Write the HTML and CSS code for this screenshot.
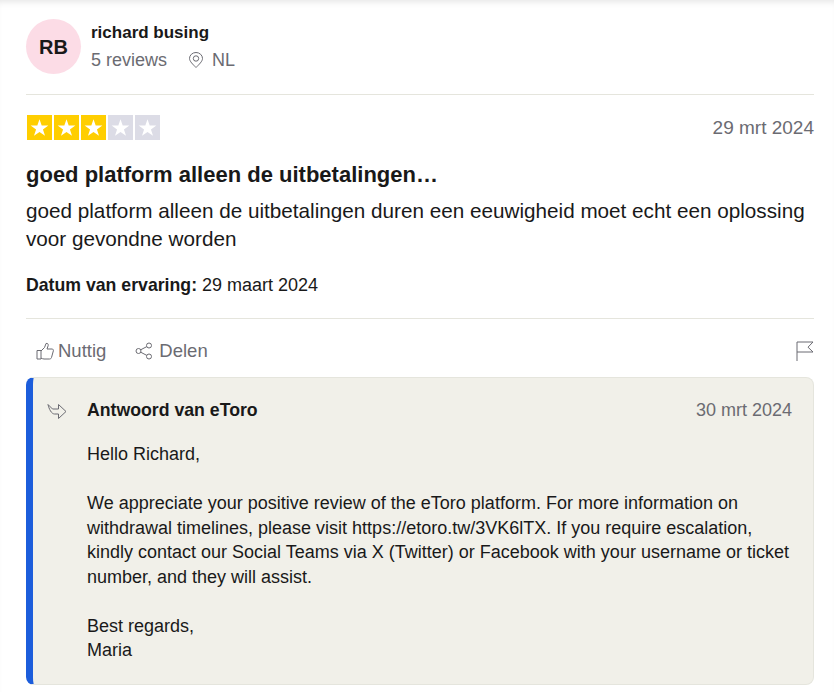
FILE: index.html

```html
<!DOCTYPE html>
<html lang="nl">
<head>
    <meta charset="UTF-8">
    <meta name="viewport" content="width=device-width, initial-scale=1.0">
    <title>Review</title>
    <link rel="stylesheet" href="styles.css">
</head>
<body>
    <article class="review">
        <header class="consumer">
            <div class="avatar">RB</div>
            <div class="consumer-info">
                <div class="consumer-name">richard busing</div>
                <div class="consumer-meta">
                    <span>5 reviews</span>
                    <span class="location">
                        <svg class="icon-pin" viewBox="0 0 16 16" width="16" height="16" fill="none" stroke="#6b6b72" stroke-width="1">
                            <path d="M8 15.500C5 12.500 1.500 9.300 1.500 6.500a6.500 6 0 0 1 13 0c0 2.800-3.500 6-6.500 9z"/>
                            <circle cx="8" cy="6.500" r="2.700"/>
                        </svg>
                        NL
                    </span>
                </div>
            </div>
        </header>

        <section class="review-body">
            <div class="rating-row">
                <div class="stars">
                    <span class="star on"><svg viewBox="0 0 24 24"><path d="M12 4l2.100 6.100h6.400l-5.200 3.800 2 6.100-5.300-3.800L6.700 20l2-6.100-5.200-3.800h6.400z"/></svg></span>
                    <span class="star on"><svg viewBox="0 0 24 24"><path d="M12 4l2.100 6.100h6.400l-5.200 3.800 2 6.100-5.300-3.800L6.700 20l2-6.100-5.200-3.800h6.400z"/></svg></span>
                    <span class="star on"><svg viewBox="0 0 24 24"><path d="M12 4l2.100 6.100h6.400l-5.200 3.800 2 6.100-5.300-3.800L6.700 20l2-6.100-5.200-3.800h6.400z"/></svg></span>
                    <span class="star"><svg viewBox="0 0 24 24"><path d="M12 4l2.100 6.100h6.400l-5.200 3.800 2 6.100-5.300-3.800L6.700 20l2-6.100-5.200-3.800h6.400z"/></svg></span>
                    <span class="star"><svg viewBox="0 0 24 24"><path d="M12 4l2.100 6.100h6.400l-5.200 3.800 2 6.100-5.300-3.800L6.700 20l2-6.100-5.200-3.800h6.400z"/></svg></span>
                </div>
                <time class="date">29 mrt 2024</time>
            </div>
            <h2 class="review-title">goed platform alleen de uitbetalingen…</h2>
            <p class="review-text">goed platform alleen de uitbetalingen duren een eeuwigheid moet echt een oplossing voor gevondne worden</p>
            <p class="experience"><b>Datum van ervaring:</b> 29 maart 2024</p>
        </section>

        <div class="actions">
            <button class="action">
                <svg viewBox="0 0 18 18" width="18" height="18" fill="none" stroke="#6b6b72" stroke-width="1">
                    <path d="M1 8.500h4V17H1z"/>
                    <path d="M5 9l3.500-3.500L10 1.500c1.500-.5 2.500.5 2.200 2L11 7h5c1.200 0 1.600 1 1.300 2l-1.800 6.500c-.3 1-1 1.500-2 1.500H8c-1.200 0-2-.6-3-.8"/>
                </svg>
                Nuttig
            </button>
            <button class="action share">
                <svg viewBox="0 0 18 18" width="18" height="18" fill="none" stroke="#6b6b72" stroke-width="1">
                    <circle cx="3.500" cy="9" r="2.500"/>
                    <circle cx="14" cy="3.500" r="2.500"/>
                    <circle cx="14" cy="14.500" r="2.500"/>
                    <path d="M5.700 7.800l6.100-3.200M5.700 10.200l6.100 3.200"/>
                </svg>
                Delen
            </button>
            <button class="action flag">
                <svg viewBox="0 0 18 20" width="18" height="20" fill="none" stroke="#6b6b72" stroke-width="1">
                    <path d="M1 20V1h16l-5 5.200 5 4.800H1"/>
                </svg>
            </button>
        </div>

        <section class="reply">
            <div class="reply-head">
                <svg class="icon-reply" viewBox="0 0 20 16" width="20" height="16" fill="none" stroke="#6b6b72" stroke-width="1">
                    <path d="M1 1.500L5.500 6h6V1.500L19 8.500l-7.500 7V11H7.500C4.500 11 2 6 1 1.500z"/>
                </svg>
                <strong class="reply-from">Antwoord van eToro</strong>
                <time class="date">30 mrt 2024</time>
            </div>
            <div class="reply-text">
                <p>Hello Richard,</p>
                <p>We appreciate your positive review of the eToro platform. For more information on withdrawal timelines, please visit https://etoro.tw/3VK6lTX. If you require escalation, kindly contact our Social Teams via X (Twitter) or Facebook with your username or ticket number, and they will assist.</p>
                <p>Best regards,<br>Maria</p>
            </div>
        </section>
    </article>
</body>
</html>
```

FILE: styles.css

```css
* {
    margin: 0;
    padding: 0;
    box-sizing: border-box;
}

body {
    background: #fff;
    font-family: "Liberation Sans", Arial, sans-serif;
    color: #191919;
    overflow: hidden;
    height: 692px;
    box-shadow: inset 0 6px 6px -4px rgba(0, 0, 0, 0.1);
}

.review {
    padding: 19px 20px 0 26px;
}

.consumer {
    display: flex;
    gap: 10px;
    padding-bottom: 20px;
    border-bottom: 1px solid #e5e5dd;
}

.avatar {
    width: 55px;
    height: 55px;
    border-radius: 50%;
    background: #fcdce6;
    display: flex;
    justify-content: center;
    align-items: center;
    padding-top: 1px;
    font-size: 20px;
    font-weight: bold;
}

.consumer-name {
    font-size: 17px;
    font-weight: bold;
    line-height: 26px;
    padding-top: 1px;
}

.consumer-meta {
    display: flex;
    gap: 21px;
    font-size: 18px;
    line-height: 28px;
    color: #6b6b72;
}

.location {
    display: flex;
    align-items: center;
    gap: 8px;
}

.review-body {
    padding-top: 20px;
    padding-bottom: 21px;
    border-bottom: 1px solid #e5e5dd;
}

.rating-row {
    display: flex;
    justify-content: space-between;
    align-items: center;
    margin-bottom: 21px;
}

.stars {
    display: flex;
    gap: 2px;
    margin-left: 1px;
}

.star {
    width: 25px;
    height: 25px;
    background: #dcdce6;
    display: flex;
}

.star.on {
    background: #ffce00;
}

.star svg {
    width: 25px;
    height: 25px;
    fill: #fff;
}

.date {
    font-size: 18px;
    color: #6b6b72;
}

.rating-row .date {
    font-size: 19px;
}

.review-title {
    font-size: 22px;
    line-height: 28px;
    font-weight: bold;
    margin-bottom: 8px;
}

.review-text {
    font-size: 20.700px;
    line-height: 28px;
    margin-bottom: 20px;
}

.experience {
    font-size: 18px;
    line-height: 24px;
}

.experience b {
    font-size: 17.700px;
}

.actions {
    display: flex;
    gap: 29px;
    align-items: center;
    padding: 20px 0 14px 10px;
}

.action {
    display: flex;
    align-items: center;
    gap: 4px;
    border: none;
    background: none;
    font-family: inherit;
    font-size: 18.500px;
    line-height: 24px;
    color: #6b6b72;
}

.share {
    gap: 6px;
}

.flag {
    margin-left: auto;
}

.reply {
    background: #f1f0e9;
    border: 1px solid #e5e5dd;
    border-left: 7px solid #1c5ddb;
    border-radius: 8px;
    padding: 22px 21px 21px 14px;
}

.reply-head {
    display: flex;
    align-items: center;
    margin-bottom: 21px;
}

.icon-reply {
    margin-right: 20px;
}

.reply-from {
    font-size: 17.700px;
}

.reply-head .date {
    margin-left: auto;
}

.reply-text {
    padding-left: 40px;
    font-size: 18px;
    line-height: 24.500px;
}

.reply-text p + p {
    margin-top: 24.500px;
}
```
